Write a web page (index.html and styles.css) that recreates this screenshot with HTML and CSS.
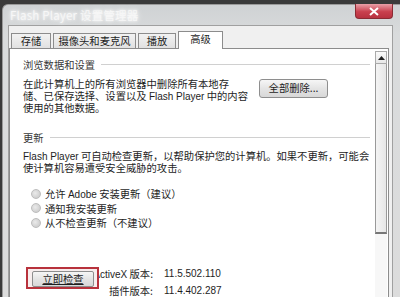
FILE: index.html
```html
<!DOCTYPE html>
<html lang="zh-CN">
<head>
<meta charset="utf-8">
<title>Flash Player 设置管理器</title>
<link rel="stylesheet" href="styles.css">
</head>
<body>
<div class="window">
  <div class="titlebar">
    <span class="title">Flash Player 设置管理器</span>
    <span class="close"><svg width="12" height="9" viewBox="0 0 12 9"><path d="M2 1 L10 8 M10 1 L2 8" stroke="#fff" stroke-width="2" fill="none"/></svg></span>
  </div>
  <div class="body">
    <div class="tabs">
      <div class="tab t1">存储</div>
      <div class="tab t2">摄像头和麦克风</div>
      <div class="tab t3">播放</div>
      <div class="tab active">高级</div>
    </div>
    <div class="panel">
      <div class="content">
        <div class="heading first"><span>浏览数据和设置</span><i class="rule"></i></div>
        <div class="row">
          <p class="para p1">在此计算机上的所有浏览器中删除所有本地存<br>储、已保存选择、设置以及 <span class="lat">Flash Player</span> 中的内容<br>使用的其他数据。</p>
          <div class="btn del">全部删除...</div>
        </div>
        <div class="heading second"><span>更新</span><i class="rule"></i></div>
        <p class="para p2"><span class="lat">Flash Player</span> 可自动检查更新，以帮助保护您的计算机。如果不更新，可能会<br>使计算机容易遭受安全威胁的攻击。</p>
        <div class="radios">
          <div class="radio"><i class="dot"></i><span>允许 <span class="lat">Adobe</span> 安装更新（建议）</span></div>
          <div class="radio"><i class="dot"></i><span>通知我安装更新</span></div>
          <div class="radio"><i class="dot"></i><span>从不检查更新（不建议）</span></div>
        </div>
        <div class="bottom">
          <div class="versions">
            <div class="vrow"><span class="vlabel"><span class="lat">ActiveX</span> 版本:</span><span class="vval lat">11.5.502.110</span></div>
            <div class="vrow"><span class="vlabel">插件版本:</span><span class="vval lat">11.4.402.287</span></div>
          </div>
          <div class="check-wrap"><div class="btn check">立即检查</div></div>
        </div>
      </div>
      <div class="scrollbar">
        <div class="arrow"><svg width="7" height="4" viewBox="0 0 7 4"><path d="M0 4 L3.5 0 L7 4 Z" fill="#222"/></svg></div>
        <div class="thumb"></div>
        <div class="track"></div>
      </div>
    </div>
  </div>
</div>
</body>
</html>
```

FILE: styles.css
```css
html, body {
  margin: 0;
  padding: 0;
}
body {
  width: 400px;
  height: 297px;
  overflow: hidden;
  background: #3a3a3a;
  font-family: "Noto Sans CJK SC", "Liberation Sans", sans-serif;
  font-size: 10.3px;
  color: #1e1e1e;
}
.lat {
  font-family: "Liberation Sans", "Noto Sans CJK SC", sans-serif;
  font-size: 10px;
}
.window {
  margin: 4px 0 0 2px;
  width: 404px;
  height: 300px;
  border-radius: 6px 6px 0 0;
  background: linear-gradient(#cfd2d4, #d9dbdc 30px, #dcdcdc);
  border: 1px solid #9a9a9a;
  border-bottom: none;
  box-sizing: border-box;
}
.titlebar {
  height: 20px;
  display: flex;
  align-items: center;
  justify-content: space-between;
  padding: 0 12px 0 7px;
}
.title {
  color: #f7f7f7;
  font-size: 11.5px;
  text-shadow: 0 0 3px #fff, 0 0 6px #fff;
  letter-spacing: 0.2px;
}
.close {
  width: 36px;
  height: 14px;
  margin-top: -7px;
  border-radius: 0 0 4px 4px;
  background: linear-gradient(#e8a0a8, #c9404e 55%, #b83240);
  border: 1px solid #8a2a33;
  border-top: none;
  display: flex;
  align-items: center;
  justify-content: center;
}
.body {
  margin: 0 12px 0 5px;
  height: 280px;
  background: #f0f0f0;
  border: 1px solid #a0a0a0;
  border-bottom: none;
  padding: 3px 3px 0 0;
  box-sizing: border-box;
}
.tabs {
  display: flex;
  align-items: flex-end;
  height: 19px;
  padding-left: 2px;
}
.tab {
  height: 15px;
  box-sizing: border-box;
  border: 1px solid #8c8c8c;
  border-bottom: none;
  background: linear-gradient(#f2f2f2, #e1e1e1);
  margin-right: 2px;
  display: flex;
  align-items: center;
  justify-content: center;
  font-size: 10.3px;
  line-height: 1;
}
.t1 { width: 40px; }
.t2 { width: 83px; }
.t3 { width: 38px; }
.tab.active {
  width: 45px;
  height: 18px;
  background: #fff;
  margin-bottom: -1px;
  position: relative;
  z-index: 1;
  margin-right: 0;
  padding-bottom: 3px;
}
.panel {
  background: #fff;
  border: 1px solid #8c8c8c;
  height: 260px;
  display: flex;
}
.content {
  flex: 1;
  padding: 9px 5px 0 13px;
}
.heading {
  display: flex;
  align-items: center;
  height: 13px;
  color: #3a3a3a;
}
.rule {
  flex: 1;
  height: 1px;
  background: #d0d0d0;
  margin-left: 6px;
}
.row {
  display: flex;
  align-items: flex-start;
  margin-top: 7px;
}
.para {
  margin: 0;
  line-height: 11.5px;
  white-space: nowrap;
}
.p1 {
  width: 212px;
}
.btn {
  background: linear-gradient(#f6f6f6, #e4e4e4 50%, #d8d8d8);
  border: 1px solid #8e8e8e;
  border-radius: 3px;
  display: flex;
  align-items: center;
  justify-content: center;
  box-sizing: border-box;
  line-height: 1;
}
.del {
  width: 69px;
  height: 19px;
  margin-left: 24px;
  margin-top: 1px;
}
.heading.second {
  margin-top: 17px;
}
.p2 {
  margin-top: 6px;
  line-height: 11px;
}
.radios {
  margin-top: 14px;
  padding-left: 8px;
}
.radio {
  display: flex;
  align-items: center;
  height: 14.5px;
}
.dot {
  width: 8px;
  height: 8px;
  border-radius: 50%;
  background: radial-gradient(circle at 40% 40%, #eaeaea, #c4c4c4);
  border: 1px solid #bdbdbd;
  margin-right: 4px;
}
.bottom {
  position: relative;
  margin-top: 35px;
}
.versions {
  display: flex;
  flex-direction: column;
}
.vrow {
  display: flex;
  height: 17px;
  align-items: center;
}
.vlabel {
  width: 130px;
  text-align: right;
}
.vval {
  margin-left: 11px;
}
.check-wrap {
  position: absolute;
  left: 3px;
  top: 2px;
  width: 73px;
  height: 22px;
  box-sizing: border-box;
  border: 2px solid #b8323c;
  background: #f7eeee;
  padding: 2px 4px;
}
.check {
  width: 62px;
  height: 16px;
  border-radius: 2px;
  text-decoration: underline;
  text-decoration-thickness: 1px;
  text-underline-offset: 1px;
}
.scrollbar {
  width: 12px;
  display: flex;
  flex-direction: column;
  padding-top: 2px;
  margin-right: 1px;
}
.arrow {
  height: 13px;
  border: 1px solid #aaa;
  box-sizing: border-box;
  background: linear-gradient(#fafafa, #e8e8e8);
  display: flex;
  align-items: center;
  justify-content: center;
}
.thumb {
  height: 170px;
  box-sizing: border-box;
  border: 1px solid #999;
  border-top: none;
  border-bottom: 2px solid #777;
  background: linear-gradient(90deg, #f4f4f4, #e6e6e6);
}
.track {
  flex: 1;
  background: #f7f7f7;
}
```
